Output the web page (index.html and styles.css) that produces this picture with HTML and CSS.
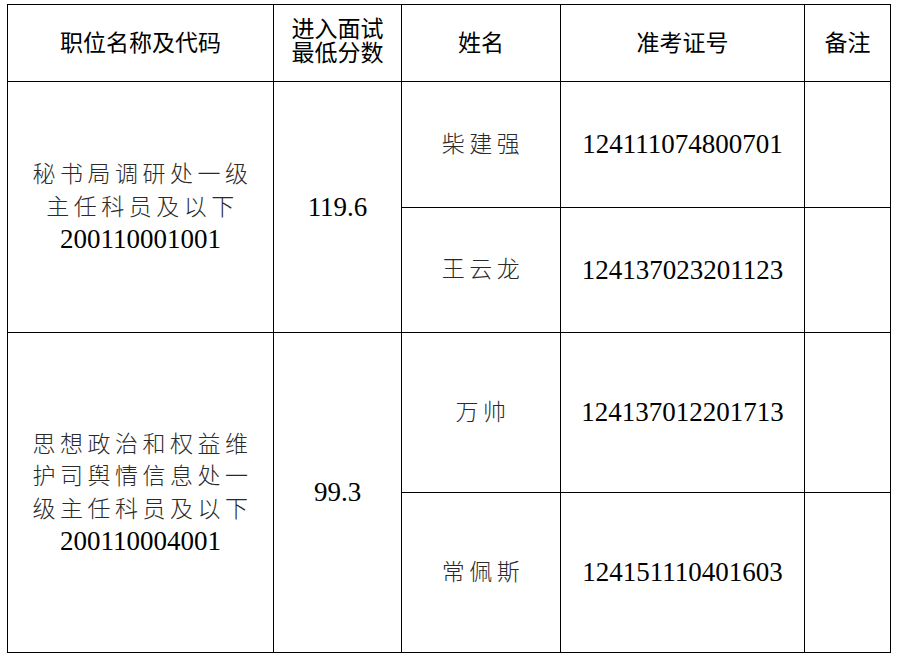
FILE: index.html
```html
<!DOCTYPE html>
<html lang="zh">
<head>
<meta charset="utf-8">
<link rel="stylesheet" href="styles.css">
</head>
<body>
<table class="grid">
  <colgroup>
    <col class="c1"><col class="c2"><col class="c3"><col class="c4"><col class="c5">
  </colgroup>
  <tr class="head">
    <th>职位名称及代码</th>
    <th class="two">进入面试<br>最低分数</th>
    <th>姓名</th>
    <th>准考证号</th>
    <th>备注</th>
  </tr>
  <tr class="r1">
    <td rowspan="2" class="pos">
      <div class="ln cn">秘书局调研处一级</div>
      <div class="ln cn">主任科员及以下</div>
      <div class="ln num">200110001001</div>
    </td>
    <td rowspan="2" class="num">119.6</td>
    <td class="cn name">柴建强</td>
    <td class="num">124111074800701</td>
    <td></td>
  </tr>
  <tr class="r2">
    <td class="cn name">王云龙</td>
    <td class="num">124137023201123</td>
    <td></td>
  </tr>
  <tr class="r3">
    <td rowspan="2" class="pos">
      <div class="ln cn">思想政治和权益维</div>
      <div class="ln cn">护司舆情信息处一</div>
      <div class="ln cn">级主任科员及以下</div>
      <div class="ln num">200110004001</div>
    </td>
    <td rowspan="2" class="num">99.3</td>
    <td class="cn name">万帅</td>
    <td class="num">124137012201713</td>
    <td></td>
  </tr>
  <tr class="r4">
    <td class="cn name">常佩斯</td>
    <td class="num">124151110401603</td>
    <td></td>
  </tr>
</table>
</body>
</html>
```
FILE: styles.css
```css
html, body {
  background: #ffffff;
}
body {
  margin: 4px 0 0 7px;
}
.grid {
  border-collapse: collapse;
  table-layout: fixed;
  width: 884px;
}
.c1 { width: 266px; }
.c2 { width: 128px; }
.c3 { width: 159px; }
.c4 { width: 244px; }
.c5 { width: 86px; }
.grid th,
.grid td {
  border: 1px solid #000;
  padding: 0;
  text-align: center;
  vertical-align: middle;
}
.grid th {
  font-family: "Noto Sans CJK SC", sans-serif;
  font-weight: 400;
  font-size: 23px;
  line-height: 24px;
  color: #000;
  padding-bottom: 4px;
}
.grid th.two {
  padding-bottom: 9px;
}
.head { height: 77px; }
.r1 { height: 126px; }
.r2 { height: 125px; }
.r3 { height: 160px; }
.r4 { height: 160px; }
.cn {
  font-family: "Noto Sans CJK SC", sans-serif;
  font-weight: 300;
  font-size: 23px;
  letter-spacing: 4.5px;
  color: #2a2a2a;
}
.num {
  font-family: "Liberation Serif", Tinos, serif;
  font-size: 27px;
  color: #000;
  letter-spacing: 0;
}
.ln {
  height: 32.5px;
  line-height: 32.5px;
  white-space: nowrap;
}
.ln.cn {
  padding-left: 4px;
  line-height: 28px;
}
.grid td.name {
  padding-left: 4px;
  padding-bottom: 6px;
}
```
